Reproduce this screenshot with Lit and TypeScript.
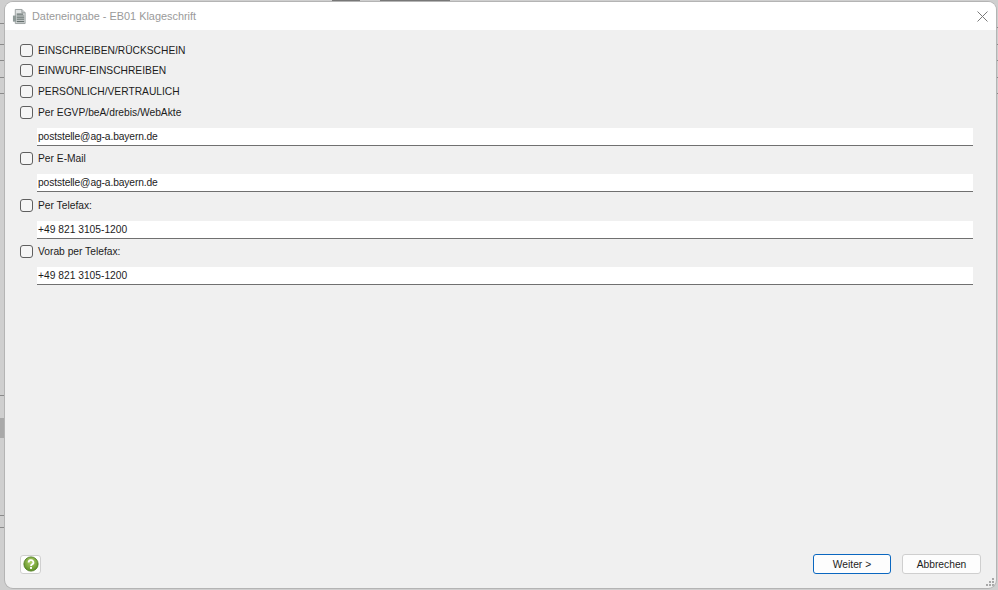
import { LitElement, html, css, svg } from "lit";
import { customElement } from "lit/decorators.js";

type Row = { label: string; value?: string };
const ROWS: Row[] = [
  { label: "EINSCHREIBEN/RÜCKSCHEIN" },
  { label: "EINWURF-EINSCHREIBEN" },
  { label: "PERSÖNLICH/VERTRAULICH" },
  { label: "Per EGVP/beA/drebis/WebAkte", value: "poststelle@ag-a.bayern.de" },
  { label: "Per E-Mail", value: "poststelle@ag-a.bayern.de" },
  { label: "Per Telefax:", value: "+49 821 3105-1200" },
  { label: "Vorab per Telefax:", value: "+49 821 3105-1200" },
];

const docIcon = svg`<svg width="15" height="17" viewBox="0 0 16 18">
  <path d="M3.5 1.5h7l3.5 3.5v11.5H3.5z" fill="#dfe2e2" stroke="#9aa0a0"/>
  <path d="M10.5 1.5v3.5h3.5" fill="#c5caca" stroke="#9aa0a0"/>
  <path d="M5 6.5h7M5 8.5h8M5 10.5h8M5 12.5h8M5 14.5h8" stroke="#66716f" stroke-width="1.2"/>
  <rect x="1" y="8" width="3.5" height="6.5" fill="#8f9a98"/>
</svg>`;

const helpIcon = svg`<svg width="16" height="16" viewBox="0 0 18 18">
  <defs><radialGradient id="g" cx="50%" cy="35%" r="65%"><stop offset="0" stop-color="#b4d36c"/><stop offset="1" stop-color="#5c8e24"/></radialGradient></defs>
  <circle cx="9" cy="9" r="8" fill="url(#g)" stroke="#4f7d20"/>
  <path d="M6.3 7.2a2.7 2.5 0 1 1 3.9 2.2c-.8.5-1.2.9-1.2 1.8" fill="none" stroke="#fff" stroke-width="2"/>
  <rect x="7.9" y="12.3" width="2.2" height="2.2" fill="#fff"/>
</svg>`;

@customElement("app-root")
export class AppRoot extends LitElement {
  static styles = css`
    :host {
      display: block;
      width: 998px;
      height: 590px;
      overflow: hidden;
      font-family: "Liberation Sans", Arial, sans-serif;
      font-size: 10.25px;
      color: #1c1c1c;
    }
    .desk {
      position: relative;
      width: 998px;
      height: 590px;
      box-sizing: border-box;
      padding: 2px 2px 2px 5px;
      background: #cfcfcf;
    }
    .stripe {
      position: absolute;
      left: 0;
      width: 5px;
      height: 1px;
      background: #8a8a8a;
    }
    .stripe.right {
      left: auto;
      right: 0;
      width: 2px;
    }
    .mark {
      position: absolute;
      top: 0;
      height: 1px;
      background: #777;
    }
    .shade {
      position: absolute;
      left: 0;
      top: 418px;
      width: 5px;
      height: 20px;
      background: #a9a9a9;
    }
    .window {
      position: relative;
      display: flex;
      flex-direction: column;
      height: 100%;
      box-sizing: border-box;
      background: #f0f0f0;
      border-radius: 8px;
      box-shadow: 0 0 0 1px #b4b4b4;
      overflow: hidden;
    }
    .title {
      flex: none;
      height: 28px;
      display: flex;
      align-items: center;
      background: #fff;
      padding: 0 8px 0 7px;
      gap: 5px;
      color: #9a9a9a;
      font-size: 10.9px;
    }
    .title span {
      flex: 1;
    }
    .close {
      display: block;
    }
    .body {
      flex: 1;
      display: flex;
      flex-direction: column;
      padding: 10px 23px 0 15px;
    }
    .row {
      display: flex;
      align-items: center;
      height: 20.6px;
      gap: 5px;
    }
    .box {
      width: 11px;
      height: 11px;
      border: 1px solid #5f5f5f;
      border-radius: 3px;
      background: #f5f5f5;
      flex: none;
    }
    .field {
      box-sizing: border-box;
      height: 18px;
      margin: 5.6px 0 2.3px 17px;
      padding-left: 1px;
      display: flex;
      align-items: center;
      background: #fff;
      border-bottom: 1px solid #707070;
    }
    .field.mail {
      letter-spacing: -0.12px;
    }
    .footer {
      flex: none;
      display: flex;
      align-items: center;
      padding: 0 15px 14px 15px;
    }
    .help {
      width: 21px;
      height: 19px;
      box-sizing: border-box;
      display: flex;
      align-items: center;
      justify-content: center;
      background: #fdfdfd;
      border: 1px solid #d0d0d0;
      border-radius: 3px;
      padding: 0;
    }
    .spacer {
      flex: 1;
    }
    button {
      font: inherit;
      color: inherit;
    }
    .btn {
      box-sizing: border-box;
      width: 79px;
      height: 20px;
      padding: 0;
      background: #fdfdfd;
      border: 1px solid #cfcfcf;
      border-radius: 3px;
    }
    .btn.primary {
      width: 78px;
      border: 1.5px solid #0a67c0;
      margin-right: 11px;
    }
    .grip {
      position: absolute;
      right: 2px;
      bottom: 2px;
      display: block;
    }
  `;

  render() {
    return html`
      <div class="desk">
        ${[23, 44, 60, 77, 93, 395, 515, 527].map(
          (y) => html`<div class="stripe" style="top:${y}px"></div>`
        )}
        ${[27, 44, 60, 77, 93].map(
          (y) => html`<div class="stripe right" style="top:${y}px"></div>`
        )}
        ${[[332, 28], [380, 70]].map(
          ([x, w]) => html`<div class="mark" style="left:${x}px;width:${w}px"></div>`
        )}
        <div class="shade"></div>
        <div class="window">
          <div class="title">
            ${docIcon}
            <span>Dateneingabe - EB01 Klageschrift</span>
            <svg class="close" width="11" height="11" viewBox="0 0 11 11">
              <path d="M.5.5l10 10M10.5.5l-10 10" stroke="#7a7a7a" stroke-width="1" fill="none" />
            </svg>
          </div>
          <div class="body">
            ${ROWS.map(
              (r) => html`
                <div class="row"><div class="box"></div><span>${r.label}</span></div>
                ${r.value
                  ? html`<div class="field ${r.value.includes("@") ? "mail" : ""}">${r.value}</div>`
                  : ""}
              `
            )}
          </div>
          <div class="footer">
            <button class="help">${helpIcon}</button>
            <div class="spacer"></div>
            <button class="btn primary">Weiter &gt;</button>
            <button class="btn">Abbrechen</button>
          </div>
          <svg class="grip" width="8" height="8" viewBox="0 0 8 8" fill="#a8a8a8">
            <rect x="6" y="0" width="2" height="2" />
            <rect x="3" y="3" width="2" height="2" />
            <rect x="6" y="3" width="2" height="2" />
            <rect x="0" y="6" width="2" height="2" />
            <rect x="3" y="6" width="2" height="2" />
            <rect x="6" y="6" width="2" height="2" />
          </svg>
        </div>
      </div>
    `;
  }
}
